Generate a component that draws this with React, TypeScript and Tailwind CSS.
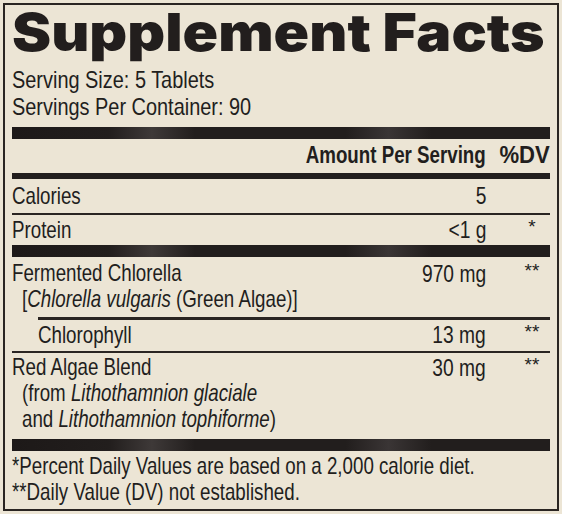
import React from "react";

const sans = { fontFamily: '"Liberation Sans", Arial, sans-serif' };

function N({
  children,
  right = false,
  scale = "scale-x-[0.78]",
}: {
  children: React.ReactNode;
  right?: boolean;
  scale?: string;
}) {
  return (
    <span className={`inline-block whitespace-nowrap ${scale} ${right ? "origin-right" : "origin-left"}`}>
      {children}
    </span>
  );
}

function ThickBar({ className = "" }: { className?: string }) {
  return (
    <div
      className={`h-[12px] w-full bg-[linear-gradient(90deg,#1d1918_0%,#221e1d_18%,#3e3938_26%,#221e1d_34%,#221e1d_62%,#3a3535_70%,#221e1d_78%,#221e1d_100%)] ${className}`}
    />
  );
}

function Row({
  label,
  amount,
  dv,
  className = "",
}: {
  label: React.ReactNode;
  amount?: string;
  dv?: string;
  className?: string;
}) {
  return (
    <div className={`flex items-start ${className}`}>
      <div className="flex-1 min-w-0">{label}</div>
      <div className="w-[120px] text-right leading-[27px]">
        {amount && (
          <N right scale="scale-x-[0.8]">
            {amount}
          </N>
        )}
      </div>
      <div className="w-[64px] flex justify-end pr-[8px]">
        <div className="w-[20px] text-center text-[19px] leading-[22px]">{dv}</div>
      </div>
    </div>
  );
}

export default function App() {
  return (
    <div className="w-[562px] h-[514px] overflow-hidden bg-[#ece5d5] p-[3px] text-[#221e1d]">
      <div className="h-full border-2 border-[#2a2522] px-[7px]" style={sans}>
        <div
          className="text-[52px] leading-[56px] font-black whitespace-nowrap"
          style={{ fontFamily: 'Inter, "Liberation Sans", sans-serif' }}
        >
          <span className="inline-block origin-left scale-x-[1.13]">Supplement Facts</span>
        </div>
        <div className="mt-[5px] text-[24px] leading-[27px]">
          <div>
            <N scale="scale-x-[0.83]">Serving Size: 5 Tablets</N>
          </div>
          <div>
            <N scale="scale-x-[0.83]">Servings Per Container: 90</N>
          </div>
        </div>
        <ThickBar className="mt-[7px]" />
        <div className="mt-[2px] flex text-[24px] leading-[27px] font-bold">
          <div className="flex-1" />
          <div className="text-right pr-[2px]">
            <N right>Amount Per Serving</N>
          </div>
          <div className="w-[62px] text-right">
            <N right scale="scale-x-[0.92]">
              %DV
            </N>
          </div>
        </div>
        <div className="mt-[5px] h-[6px] bg-[#221e1d]" />
        <div className="text-[24px] leading-[27px]">
          <Row className="mt-[3px]" label={<N>Calories</N>} amount="5" />
          <div className="mt-[4px] h-[2px] bg-[#2a2522]" />
          <Row className="mt-[1px]" label={<N>Protein</N>} amount="<1 g" dv="*" />
          <ThickBar className="mt-[2px]" />
          <Row
            className="mt-[3px]"
            label={
              <div className="leading-[26px]">
                <div>
                  <N>Fermented Chlorella</N>
                </div>
                <div className="pl-[10px]">
                  <N>
                    [<i>Chlorella vulgaris</i> (Green Algae)]
                  </N>
                </div>
              </div>
            }
            amount="970 mg"
            dv="**"
          />
          <div className="ml-[26px] mt-[5px] h-[3px] bg-[#2a2522]" />
          <Row
            className="mt-[1px]"
            label={
              <div className="pl-[26px]">
                <N>Chlorophyll</N>
              </div>
            }
            amount="13 mg"
            dv="**"
          />
          <div className="mt-[3px] h-[2px] bg-[#2a2522]" />
          <Row
            className="mt-[1px]"
            label={
              <div className="leading-[26px]">
                <div>
                  <N>Red Algae Blend</N>
                </div>
                <div className="pl-[10px]">
                  <N>
                    (from <i>Lithothamnion glaciale</i>
                  </N>
                </div>
                <div className="pl-[10px]">
                  <N>
                    and <i>Lithothamnion tophiforme</i>)
                  </N>
                </div>
              </div>
            }
            amount="30 mg"
            dv="**"
          />
          <ThickBar className="mt-[7px]" />
          <div className="mt-[2px] leading-[26px]">
            <div>
              <N>*Percent Daily Values are based on a 2,000 calorie diet.</N>
            </div>
            <div>
              <N>**Daily Value (DV) not established.</N>
            </div>
          </div>
        </div>
      </div>
    </div>
  );
}
